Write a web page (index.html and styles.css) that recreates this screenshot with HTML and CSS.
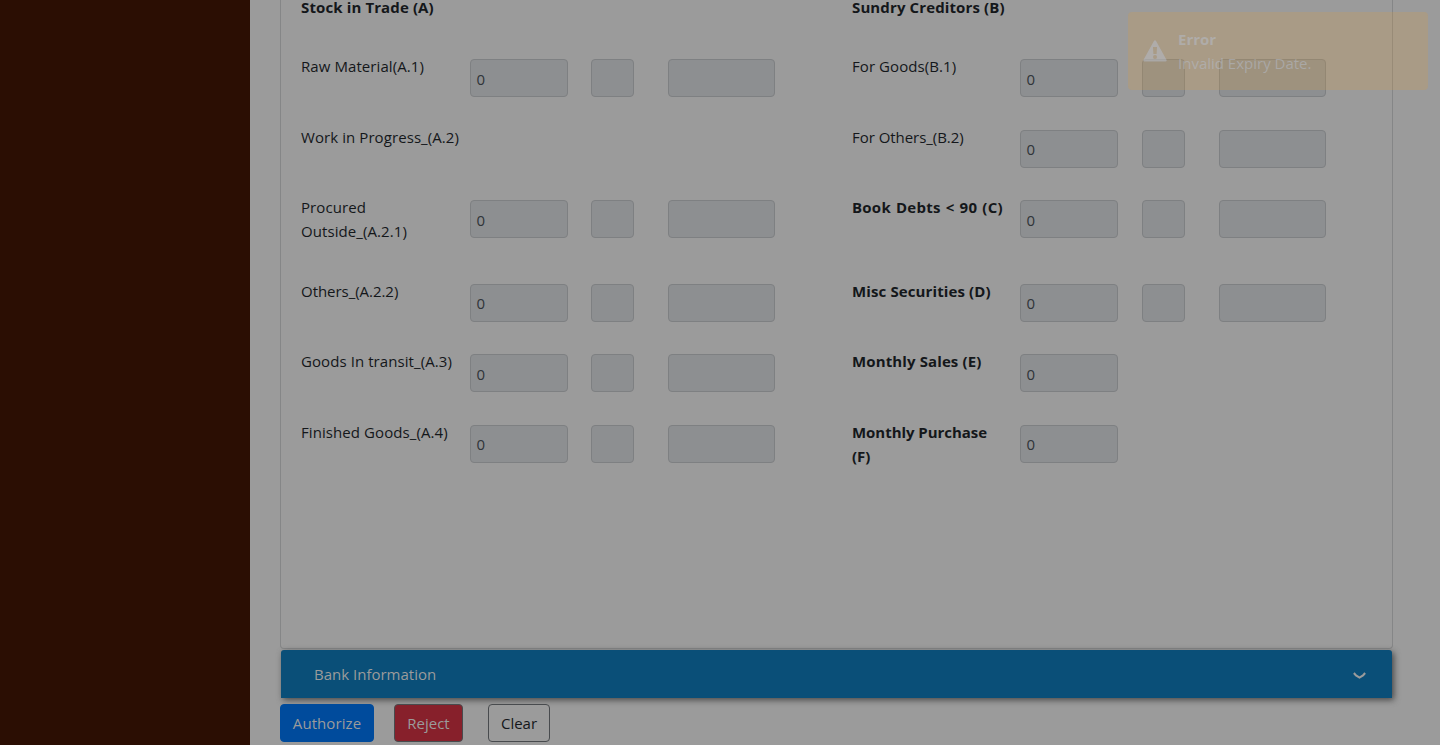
FILE: index.html
```html
<!DOCTYPE html>
<html lang="en">
<head>
<meta charset="utf-8">
<title>Stock Statement</title>
<link rel="stylesheet" href="styles.css">
</head>
<body>
<div class="app">
  <aside class="sidebar"></aside>
  <main class="content">
    <section class="panel">
      <div class="form-grid">
        <b class="label left">Stock in Trade (A)</b>
        <b class="label right">Sundry Creditors (B)</b>

        <span class="label left">Raw Material(A.1)</span>
        <div class="field low">0</div><div class="field"></div><div class="field"></div>
        <span class="label right">For Goods(B.1)</span>
        <div class="field low">0</div><div class="field"></div><div class="field"></div>

        <span class="label left">Work in Progress_(A.2)</span>
        <span class="label right tight">For Others_(B.2)</span>
        <div class="field">0</div><div class="field"></div><div class="field"></div>

        <span class="label left">Procured Outside_(A.2.1)</span>
        <div class="field low">0</div><div class="field"></div><div class="field"></div>
        <b class="label right wide">Book Debts &lt; 90 (C)</b>
        <div class="field low">0</div><div class="field"></div><div class="field"></div>

        <span class="label left tight">Others_(A.2.2)</span>
        <div class="field">0</div><div class="field"></div><div class="field"></div>
        <b class="label right">Misc Securities (D)</b>
        <div class="field">0</div><div class="field"></div><div class="field"></div>

        <span class="label left">Goods In transit_(A.3)</span>
        <div class="field low">0</div><div class="field"></div><div class="field"></div>
        <b class="label right">Monthly Sales (E)</b>
        <div class="field low">0</div>

        <span class="label left">Finished Goods_(A.4)</span>
        <div class="field">0</div><div class="field"></div><div class="field"></div>
        <b class="label right narrow">Monthly Purchase (F)</b>
        <div class="field">0</div>
      </div>
    </section>
    <div class="accordion">
      <span class="accordion-title">Bank Information</span>
      <svg class="chevron" width="13" height="8" viewBox="0 0 13 8"><path d="M.9 1L3 3.4L6.5 5.6L10 3.4L12.1 1" fill="none" stroke="currentColor" stroke-width="2.1"/></svg>
    </div>
    <div class="actions">
      <button class="btn authorize">Authorize</button>
      <button class="btn reject">Reject</button>
      <button class="btn clear">Clear</button>
    </div>
  </main>
</div>
<div class="toast">
  <svg class="warning" width="24" height="22" viewBox="0 0 24 22"><path fill="currentColor" fill-rule="evenodd" d="M10.9 1Q12 -.5 13.1 1L23.6 20Q24 21.5 22.5 21.6H1.5Q0 21.5 .4 20ZM10 7L10.4 14H13.6L14 7ZM12 15A2 2 0 1 0 12 19A2 2 0 1 0 12 15Z"/></svg>
  <div class="toast-text">
    <b class="toast-title">Error</b>
    <span class="toast-message">Invalid Expiry Date.</span>
  </div>
</div>
</body>
</html>
```
FILE: styles.css
```css
* { box-sizing: border-box; }
body {
  margin: 0;
  height: 745px;
  overflow: hidden;
  background: #9b9b9b;
  color: #14171a;
  font: 15px/24px "Open Sans", "Noto Sans", sans-serif;
}
.app { display: flex; height: 745px; }
.sidebar { width: 250px; background: #2b0e03; flex: none; }
.content { flex: 1; padding: 0 47px 0 30px; }
.panel {
  display: flow-root;
  height: 649px;
  padding-left: 20px;
  border: 1px solid #858687;
  border-top: 0;
  border-radius: 0 0 4px 4px;
}
.form-grid {
  display: grid;
  grid-template-columns: 169px 98px 23px 43px 34px 107px 77px 168px 98px 24px 43px 34px 107px;
  grid-template-rows: 59px 71px 70px 84px 70px 71px 60px;
  margin-top: -5px;
}
.label { padding-right: 9px; letter-spacing: .08px; }
b.label { letter-spacing: .12px; }
.label.tight { letter-spacing: -.04px; }
.label.wide { letter-spacing: .25px; word-spacing: .9px; }
b.label.narrow { letter-spacing: -.04px; padding-right: 20px; }
.left { grid-column: 1; }
.right { grid-column: 8; }
.left + .field { grid-column: 2; }
.left + .field + .field { grid-column: 4; }
.left + .field + .field + .field { grid-column: 6; }
.right + .field { grid-column: 9; }
.right + .field + .field { grid-column: 11; }
.right + .field + .field + .field { grid-column: 13; }
.field {
  height: 38px;
  margin-top: 5px;
  padding: 6px 5.5px;
  border: 1px solid #7e8082;
  border-radius: 4px;
  background: #8d8f91;
  color: #303438;
}
.field.low { padding-top: 7px; }
.accordion {
  display: flex;
  align-items: center;
  justify-content: space-between;
  height: 48px;
  margin: 1px 1px 0;
  padding: 0 26px 0 33px;
  border-radius: 3px 3px 0 0;
  background: #0a4f78;
  color: #9b9b9b;
  box-shadow: 2px 2px 6px #484848;
}
.chevron { margin-top: 3px; }
.actions { display: flex; padding-top: 6px; }
.btn {
  height: 38px;
  padding: 0;
  border: 1px solid #484b4e;
  border-radius: 4px;
  font: inherit;
}
.authorize { width: 94px; background: #004b9c; border-color: #004b9c; color: #9b9b9b; letter-spacing: .08px; }
.reject { width: 69px; margin-left: 20px; background: #87202b; color: #9b9b9b; }
.clear { width: 62px; margin-left: 25px; background: #9b9b9b; color: #14171a; }
.toast {
  position: absolute;
  top: 12px;
  right: 12px;
  width: 300px;
  height: 78px;
  display: flex;
  padding: 15px 15px;
  border-radius: 4px;
  background: rgba(207, 153, 75, .26);
  color: rgba(182, 190, 205, .5);
}
.warning { margin: 13px 11px 0 0; }
.toast-text { display: flex; flex-direction: column; }
```
